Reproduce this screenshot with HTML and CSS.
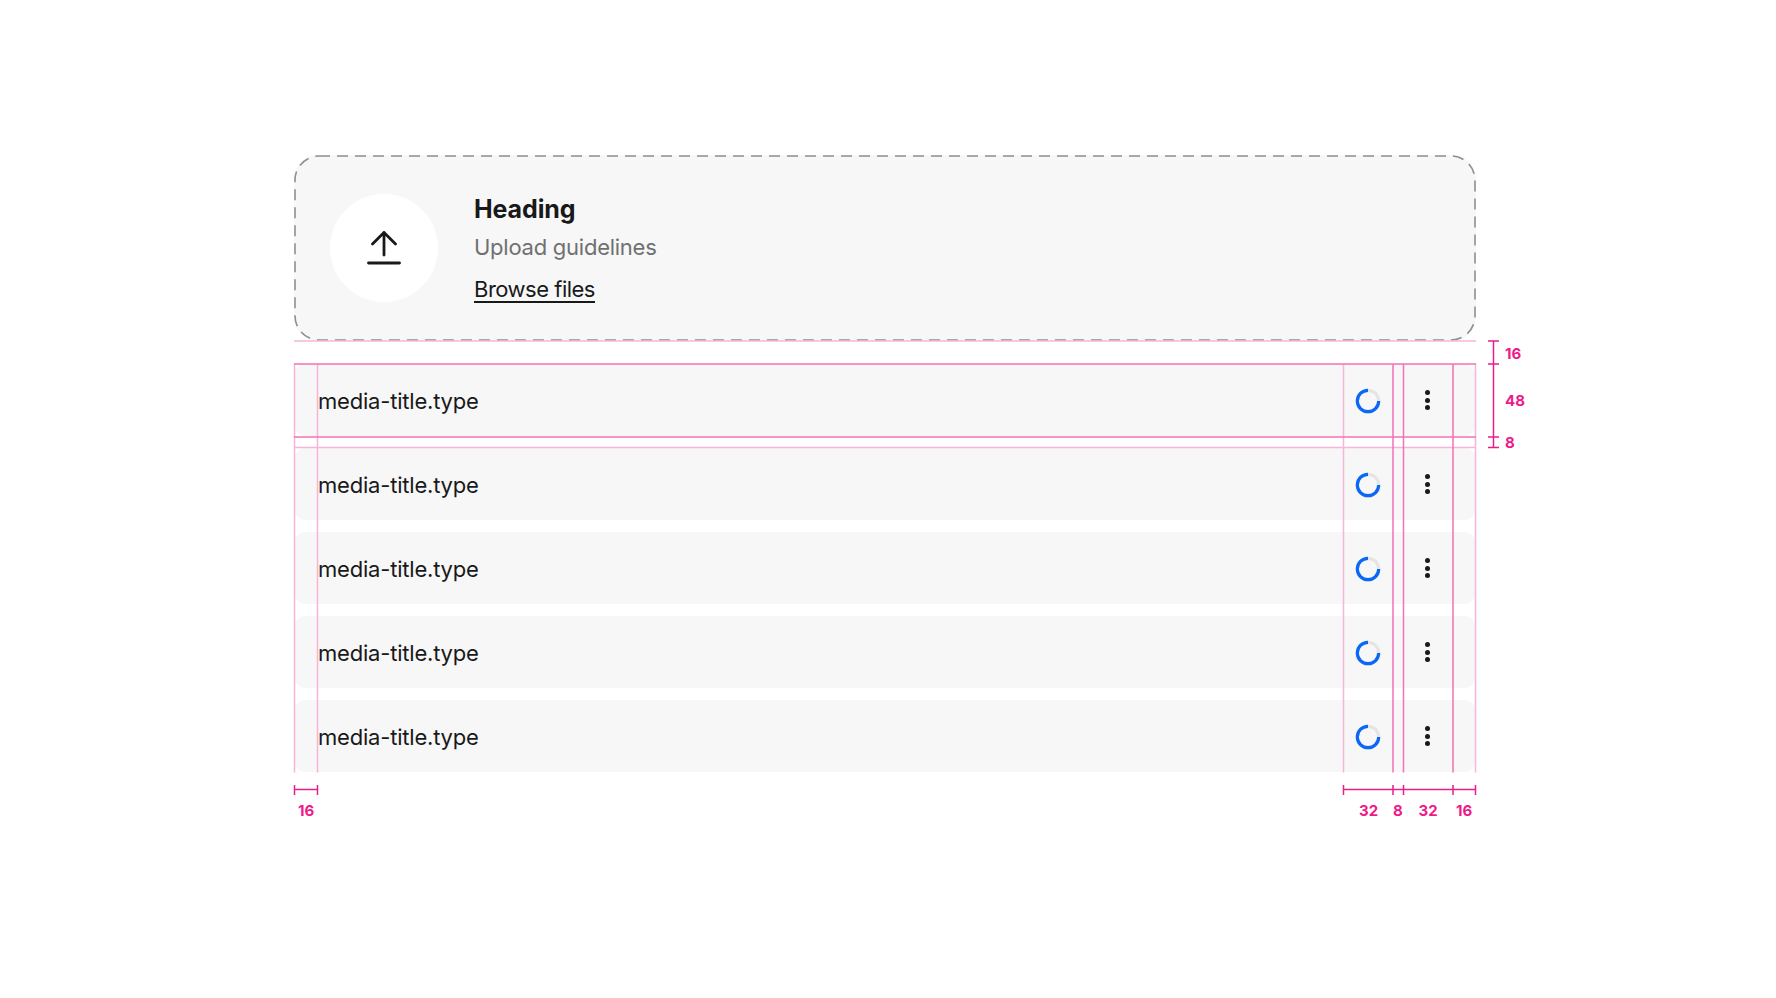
FILE: index.html
```html
<!DOCTYPE html>
<html lang="en">
<head>
<meta charset="utf-8">
<title>File upload anatomy</title>
<link rel="stylesheet" href="styles.css">
</head>
<body>
<main class="spec">
  <section class="drop">
    <svg class="dash" width="1182" height="186" viewBox="0 0 1182 186"><rect x="1" y="1" width="1180" height="184" rx="24" ry="24"/></svg>
    <div class="drop-icon">
      <svg width="40" height="40" viewBox="0 0 40 40"><path d="M20 4.500V27M8.500 16 20 4.500 31.500 16M4.500 35H35.500"/></svg>
    </div>
    <div class="drop-text">
      <h2 class="heading">Heading</h2>
      <p class="guide-text">Upload guidelines</p>
      <a class="browse" href="#">Browse files</a>
    </div>
  </section>
  <ul class="files">
    <li class="file"><span class="name">media-title.type</span>
      <span class="status"><svg width="32" height="32" viewBox="0 0 32 32"><circle class="track" cx="16" cy="16" r="10.700"/><path class="arc" d="M26.700 16A10.700 10.700 0 1 1 16 5.300"/></svg></span>
      <span class="more"><i></i><i></i><i></i></span></li>
    <li class="file"><span class="name">media-title.type</span>
      <span class="status"><svg width="32" height="32" viewBox="0 0 32 32"><circle class="track" cx="16" cy="16" r="10.700"/><path class="arc" d="M26.700 16A10.700 10.700 0 1 1 16 5.300"/></svg></span>
      <span class="more"><i></i><i></i><i></i></span></li>
    <li class="file"><span class="name">media-title.type</span>
      <span class="status"><svg width="32" height="32" viewBox="0 0 32 32"><circle class="track" cx="16" cy="16" r="10.700"/><path class="arc" d="M26.700 16A10.700 10.700 0 1 1 16 5.300"/></svg></span>
      <span class="more"><i></i><i></i><i></i></span></li>
    <li class="file"><span class="name">media-title.type</span>
      <span class="status"><svg width="32" height="32" viewBox="0 0 32 32"><circle class="track" cx="16" cy="16" r="10.700"/><path class="arc" d="M26.700 16A10.700 10.700 0 1 1 16 5.300"/></svg></span>
      <span class="more"><i></i><i></i><i></i></span></li>
    <li class="file"><span class="name">media-title.type</span>
      <span class="status"><svg width="32" height="32" viewBox="0 0 32 32"><circle class="track" cx="16" cy="16" r="10.700"/><path class="arc" d="M26.700 16A10.700 10.700 0 1 1 16 5.300"/></svg></span>
      <span class="more"><i></i><i></i><i></i></span></li>
  </ul>
</main>
<svg class="redlines" width="1776" height="998" viewBox="0 0 1776 998">
  <g class="soft">
    <path d="M294 341H1476M294 447.500H1476"/>
    <path d="M294.500 364V772.500M317.500 364V772.500M1343.500 364V772.500M1475.500 364V772.500"/>
  </g>
  <g class="strong">
    <path d="M294 364H1476M294 437H1476"/>
    <path d="M1393 364V772.500M1403.500 364V772.500M1453 364V772.500"/>
  </g>
  <g class="measure">
    <path d="M1493.500 341V447.500M1488 341H1499M1488 364H1499M1488 437H1499M1488 447.500H1499"/>
    <path d="M294.500 789.500H317.500M294.500 785V795M317.500 785V795"/>
    <path d="M1343.500 789.500H1475.500M1343.500 785V795M1393 785V795M1403.500 785V795M1453 785V795M1475.500 785V795"/>
  </g>
  <g class="labels">
    <text x="1505" y="359">16</text>
    <text x="1505" y="406">48</text>
    <text x="1505" y="448">8</text>
    <text x="298" y="816">16</text>
    <text x="1359" y="816">32</text>
    <text x="1393" y="816">8</text>
    <text x="1418.500" y="816">32</text>
    <text x="1456" y="816">16</text>
  </g>
</svg>
</body>
</html>
```
FILE: styles.css
```css
* { box-sizing: border-box; }
html, body { margin: 0; height: 100%; background: #fff; }
body { font-family: "Inter", "Liberation Sans", sans-serif; color: #191919; overflow: hidden; }
.spec { width: 1182px; margin: 155px 0 0 294px; display: flex; flex-direction: column; gap: 23px; }
.drop { position: relative; height: 186px; background: #f7f7f7; border-radius: 24px; display: flex; align-items: center; gap: 36px; padding-left: 36px; }
.dash { position: absolute; inset: 0; }
.dash rect { fill: none; stroke: #8f8f8f; stroke-width: 1.6; stroke-dasharray: 11 7; }
.drop-icon { width: 108px; height: 108px; border-radius: 50%; background: #fff; display: flex; align-items: center; justify-content: center; flex: none; }
.drop-icon svg { fill: none; stroke: #191919; stroke-width: 2.8; stroke-linecap: round; stroke-linejoin: round; }
.drop-text { display: flex; flex-direction: column; align-items: flex-start; padding-top: 2px; }
.heading { margin: 0; font-size: 25px; line-height: 32px; font-weight: 700; letter-spacing: -0.1px; }
.guide-text { margin: 6px 0 0; font-size: 22px; line-height: 32px; color: #707070; letter-spacing: -0.25px; }
.browse { margin-top: 10px; font-size: 22px; line-height: 32px; color: #191919; letter-spacing: -0.5px; text-decoration: underline; text-underline-offset: 4px; }
.files { list-style: none; margin: 0; padding: 0; display: flex; flex-direction: column; gap: 12px; }
.file { height: 72px; background: #f7f7f7; border-radius: 12px; display: flex; align-items: center; padding: 0 23px; }
.name { flex: 1; font-size: 22px; letter-spacing: -0.2px; padding: 1px 0 0 1px; }
.status { width: 50px; height: 32px; display: flex; align-items: center; justify-content: center; }
.status svg { fill: none; stroke-width: 3.2; margin-top: 1px; }
.track { stroke: #e5e5e5; }
.arc { stroke: #0968f6; stroke-linecap: butt; }
.more { width: 50px; padding-right: 1px; margin-left: 10px; display: flex; flex-direction: column; align-items: center; gap: 2.500px; }
.more i { width: 5px; height: 5px; border-radius: 50%; background: #191919; }
.redlines { position: absolute; left: 0; top: 0; pointer-events: none; }
.redlines path { fill: none; stroke-width: 1.5; }
.soft path { stroke: #f9b4d8; }
.strong path { stroke: #f472b6; }
.measure path { stroke: #e91e8c; stroke-width: 1.5; }
.labels text { font-family: "Inter", "Liberation Sans", sans-serif; font-size: 15px; font-weight: 700; fill: #ee1a8a; }
```
